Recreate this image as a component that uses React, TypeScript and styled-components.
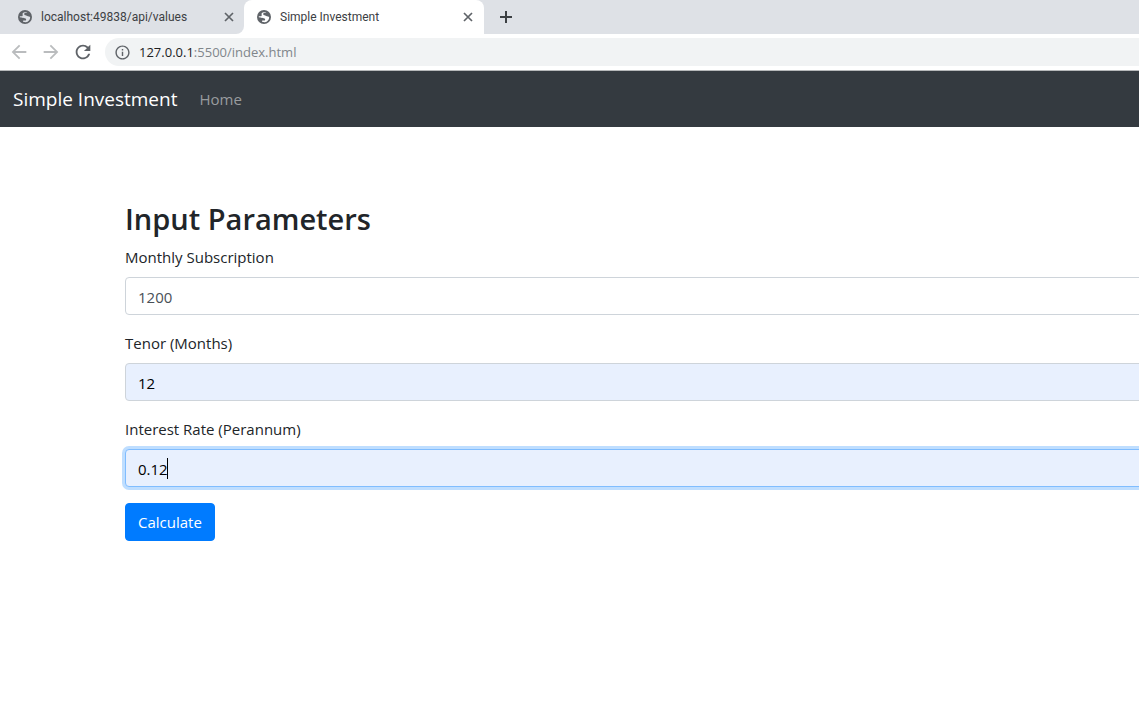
import React, { useState } from "react";
import styled, { createGlobalStyle, css } from "styled-components";
import { MdArrowBack, MdArrowForward, MdInfoOutline, MdRefresh } from "react-icons/md";

const GlobalStyle = createGlobalStyle`
  *, *::before, *::after { box-sizing: border-box; }
  body {
    margin: 0;
    background: #fff;
    color: #212529;
    font-family: "Segoe UI", "Open Sans", "Noto Sans", sans-serif;
    font-size: 15px;
    line-height: 24px;
    overflow-x: hidden;
  }
  button, input { font: inherit; }
`;

const TabStrip = styled.div`
  display: flex;
  align-items: stretch;
  height: 34px;
  background: #dee1e6;
`;

const TabGround = styled.div`
  display: flex;
  background: linear-gradient(#dee1e6 50%, #fff 50%);
`;

const Tab = styled.div<{ $active?: boolean }>`
  display: flex;
  align-items: center;
  gap: 9px;
  width: ${(p) => (p.$active ? 240 : 244)}px;
  padding: 0 ${(p) => (p.$active ? 9 : 8)}px 0 ${(p) => (p.$active ? 13 : 18)}px;
  color: #3c4043;
  font-family: "Segoe UI", Roboto, sans-serif;
  font-size: 12px;
  line-height: 16px;
  background: ${(p) => (p.$active ? "#fff" : "#dee1e6")};
  border-radius: ${(p) => (p.$active ? "8px 8px 0 0" : "0 0 8px 0")};
`;

const TabTitle = styled.span`
  flex: 1;
  white-space: nowrap;
`;

const StripRest = styled.div`
  flex: 1;
  display: flex;
  align-items: center;
  padding-left: 12px;
  background: #dee1e6;
  border-bottom-left-radius: 8px;
`;

const IconButton = styled.button<{ $color?: string }>`
  display: flex;
  align-items: center;
  justify-content: center;
  padding: 0;
  border: 0;
  background: none;
  color: ${(p) => p.$color ?? "#5f6368"};
`;

const Toolbar = styled.div`
  display: flex;
  align-items: center;
  height: 37px;
  padding: 4px 0 4px 8px;
  gap: 10px;
  border-bottom: 1px solid #b6b8ba;
`;

const AddressBar = styled.div`
  flex: 1;
  display: flex;
  align-items: center;
  gap: 8px;
  height: 28px;
  margin-left: 1px;
  padding-left: 9px;
  border-radius: 14px 0 0 14px;
  background: #f1f3f4;
  color: #5f6368;
`;

const Address = styled.a`
  color: #80868b;
  font-size: 13px;
  line-height: 20px;
  text-decoration: none;
`;

const Host = styled.span`
  color: #202124;
`;

const Navbar = styled.nav`
  display: flex;
  align-items: center;
  gap: 22px;
  height: 56px;
  padding: 0 13px;
  background: #343a40;
`;

const Brand = styled.a`
  color: #fff;
  font-size: 19px;
  line-height: 30px;
  text-decoration: none;
`;

const NavLink = styled.a`
  color: #999c9f;
  text-decoration: none;
`;

const Main = styled.main`
  padding: 72px 0 0 125px;
  overflow: hidden;
`;

const Form = styled.form`
  width: 100vw;
`;

const Title = styled.h2`
  margin: 0 0 6px;
  font-size: 29px;
  font-weight: 600;
  line-height: 40px;
`;

const Group = styled.div`
  position: relative;
  margin-bottom: 16px;
`;

const Label = styled.label`
  display: block;
  margin-bottom: 8px;
`;

const Input = styled.input<{ $filled?: boolean; $focused?: boolean }>`
  display: block;
  width: 100%;
  height: 38px;
  padding: 7px 12px 5px;
  border: 1px solid #ced4da;
  border-radius: 4px;
  outline: 0;
  color: ${(p) => (p.$filled ? "#000" : "#495057")};
  background: ${(p) => (p.$filled ? "#e8f0fe" : "#fff")};
  ${(p) =>
    p.$focused &&
    css`
      border-color: #80bdff;
      box-shadow: 0 0 0 3px #bfdeff;
    `}
`;

const Caret = styled.span`
  position: absolute;
  bottom: 8px;
  left: 42px;
  width: 1px;
  height: 21px;
  background: #000;
`;

const Submit = styled.button`
  height: 38px;
  padding: 6px 12px;
  border: 1px solid #007bff;
  border-radius: 4px;
  color: #fff;
  background: #007bff;
`;

function Globe({ land }: { land: string }) {
  return (
    <svg width="14" height="14" viewBox="0 0 14 14" fill="none" aria-hidden="true">
      <circle cx="7" cy="7" r="7" fill="#5f6368" />
      <path
        d="M9.4 2C8.4 2.8 6.6 2.6 6.2 3.8C5.8 5.2 8.2 5.4 9.2 6C10 6.6 12.2 6.4 12.2 7.4C12 9.8 10.4 11.6 8 12.2C6.8 12.3 5.8 12 5 11.7L5.2 10.6L7.8 10.4C8.6 9.4 8 8.6 6.8 8.2C5.4 7.8 4.6 8 3.6 7.4L1.8 7.2V6.2L4.2 6.3C5.2 5.8 4.4 4.6 4.6 3.6C4.9 2.4 7 1.6 9.4 2Z"
        fill={land}
      />
    </svg>
  );
}

function Cross() {
  return (
    <svg width="14" height="14" viewBox="0 0 14 14" fill="none" stroke="currentColor" strokeWidth="1.7" aria-hidden="true">
      <path d="M3 3L11 11M11 3L3 11" />
    </svg>
  );
}

function Plus() {
  return (
    <svg width="20" height="20" viewBox="0 0 20 20" fill="none" stroke="currentColor" strokeWidth="2" aria-hidden="true">
      <path d="M4 10H16M10 4V16" />
    </svg>
  );
}

const initialFields = [
  { id: "subscription", label: "Monthly Subscription", value: "1200", filled: false },
  { id: "tenor", label: "Tenor (Months)", value: "12", filled: true },
  { id: "rate", label: "Interest Rate (Perannum)", value: "0.12", filled: true },
];

export default function App() {
  const [fields, setFields] = useState(initialFields);
  const [focused, setFocused] = useState("rate");
  const [idle, setIdle] = useState(true);

  const change = (id: string, value: string) =>
    setFields(fields.map((f) => (f.id === id ? { ...f, value } : f)));

  return (
    <>
      <GlobalStyle />
      <header>
        <TabStrip>
          <TabGround>
            <Tab>
              <Globe land="#dee1e6" />
              <TabTitle>localhost:49838/api/values</TabTitle>
              <IconButton aria-label="Close tab"><Cross /></IconButton>
            </Tab>
            <Tab $active>
              <Globe land="#fff" />
              <TabTitle>Simple Investment</TabTitle>
              <IconButton aria-label="Close tab"><Cross /></IconButton>
            </Tab>
          </TabGround>
          <StripRest>
            <IconButton $color="#3c4043" aria-label="New tab"><Plus /></IconButton>
          </StripRest>
        </TabStrip>
        <Toolbar>
          <IconButton $color="#babcbe" aria-label="Back"><MdArrowBack size={22} /></IconButton>
          <IconButton $color="#babcbe" aria-label="Forward"><MdArrowForward size={22} /></IconButton>
          <IconButton aria-label="Reload"><MdRefresh size={22} /></IconButton>
          <AddressBar>
            <MdInfoOutline size={17} />
            <Address href="#"><Host>127.0.0.1</Host>:5500/index.html</Address>
          </AddressBar>
        </Toolbar>
      </header>
      <Navbar>
        <Brand href="#">Simple Investment</Brand>
        <NavLink href="#">Home</NavLink>
      </Navbar>
      <Main>
        <Form onSubmit={(e) => e.preventDefault()}>
          <Title>Input Parameters</Title>
          {fields.map((f) => (
            <Group key={f.id}>
              <Label htmlFor={f.id}>{f.label}</Label>
              <Input
                id={f.id}
                value={f.value}
                $filled={f.filled}
                $focused={focused === f.id}
                onFocus={() => {
                  setFocused(f.id);
                  setIdle(false);
                }}
                onChange={(e) => change(f.id, e.target.value)}
              />
              {idle && focused === f.id && <Caret />}
            </Group>
          ))}
          <Submit type="submit">Calculate</Submit>
        </Form>
      </Main>
    </>
  );
}
